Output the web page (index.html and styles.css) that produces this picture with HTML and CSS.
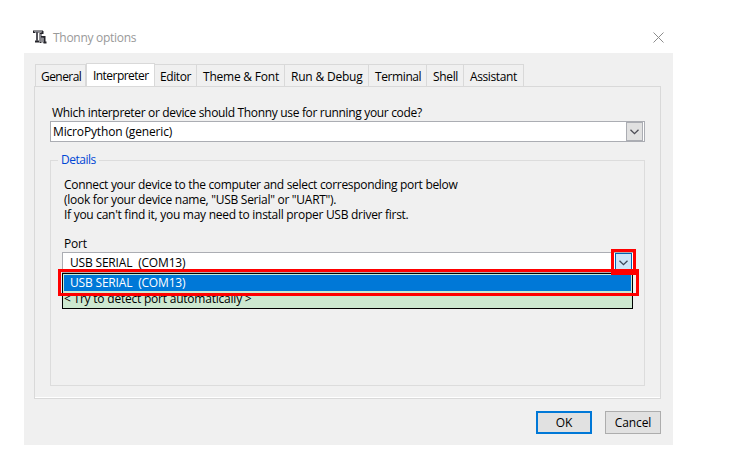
FILE: index.html
```html
<!DOCTYPE html>
<html lang="en">
<head>
<meta charset="utf-8">
<title>Thonny options</title>
<link rel="stylesheet" href="styles.css">
</head>
<body>
<main class="dialog">
  <header class="titlebar">
    <svg class="logo" width="14" height="14" viewBox="0 0 14 14"><path d="M0 1.500h10M4 2v9.500M1 3V1M9.500 1v3M2 11.500h4M7.500 3v10M7 8.500l2-1.500h2.500v5.500h2M10.500 8v4.500" fill="none" stroke="#25252b" stroke-width="2"/><path d="M1 1.500h8M4 2v9M7.500 4v8M8 8h2.500v4" fill="none" stroke="#9999a2" stroke-width=".8"/></svg>
    <h1>Thonny options</h1>
    <svg class="close" width="11" height="11" viewBox="0 0 11 11"><path d="M.5.5l10 10M10.500.5l-10 10" stroke="#8c8c8c" fill="none"/></svg>
  </header>
  <nav class="tabs">
    <span class="tab general">General</span><span class="tab active">Interpreter</span><span class="tab editor">Editor</span><span class="tab theme">Theme &amp; Font</span><span class="tab run">Run &amp; Debug</span><span class="tab terminal">Terminal</span><span class="tab shell">Shell</span><span class="tab assistant">Assistant</span>
  </nav>
  <section class="pane">
    <p class="question">Which interpreter or device should Thonny use for running your code?</p>
    <div class="combo"><span class="micro">MicroPython (generic)</span><span class="arrow"><svg width="9" height="6" viewBox="0 0 9 6"><path d="M.5.7l4 4 4-4" fill="none" stroke="#4c4c55" stroke-width="1.300"/></svg></span></div>
    <fieldset class="details">
      <legend>Details</legend>
      <div class="help">
        <p>Connect your device to the computer and select corresponding port below</p>
        <p class="hint">(look for your device name, "USB Serial" or "UART").</p>
        <p class="hint">If you can't find it, you may need to install proper USB driver first.</p>
      </div>
      <p class="port">Port</p>
      <div class="combo port-combo"><span class="usb">USB SERIAL&nbsp; (COM13)</span><span class="arrow hot"><svg width="9" height="6" viewBox="0 0 9 6"><path d="M.5.7l4 4 4-4" fill="none" stroke="#3c4658" stroke-width="1.300"/></svg></span>
        <div class="list"><div class="item selected"><span class="usb">USB SERIAL&nbsp; (COM13)</span></div><div class="item auto">&lt; Try to detect port automatically &gt;</div></div>
        <i class="mark mark-list"></i><i class="mark mark-arrow"></i>
      </div>
    </fieldset>
  </section>
  <footer class="buttons"><button class="ok">OK</button><button class="cancel">Cancel</button></footer>
</main>
</body>
</html>
```
FILE: styles.css
```css
* { box-sizing: border-box; }
body { margin: 0; background: #fff; }
.dialog {
  width: 649px; height: 445px; margin-left: 24px;
  display: flex; flex-direction: column;
  background: #f0f0f0; color: #000;
  font: 12px/15px "Open Sans", "Noto Sans", sans-serif;
  white-space: nowrap;
}
p { margin: 0; }
.titlebar { height: 53px; padding: 22px 9px 0 9px; background: #fff; display: flex; align-items: center; }
.logo { margin-top: -1px; }
.titlebar h1 { margin: 0 auto 0 6px; font-size: 12px; font-weight: 400; color: #999; letter-spacing: -.28px; }
.tabs { display: flex; align-items: flex-end; height: 33px; padding-left: 11px; }
.tab { height: 22px; border-top: 1px solid #d9d9d9; border-right: 1px solid #d9d9d9; padding: 4px 0 0 5px; letter-spacing: -.35px; }
.general { width: 51px; border-left: 1px solid #d9d9d9; letter-spacing: -.55px; }
.active { width: 69px; height: 23px; background: #fff; border-left: 1px solid #d9d9d9; padding-left: 6px; letter-spacing: -.55px; }
.editor { width: 42px; letter-spacing: -.4px; }
.theme { width: 88px; padding-left: 6px; letter-spacing: -.22px; }
.run { width: 84px; padding-left: 6px; letter-spacing: -.2px; }
.terminal { width: 58px; padding-left: 6px; letter-spacing: -.4px; }
.shell { width: 37px; padding-left: 6px; }
.assistant { width: 60px; padding-left: 6px; letter-spacing: -.4px; }
.pane { width: 627px; height: 313px; margin-left: 10px; padding: 18px 15px 0; border: 1px solid #d9d9d9; box-shadow: inset 0 -1px #fff; }
.question { padding-left: 2px; letter-spacing: -.33px; height: 16px; }
.combo { height: 21px; border: 1px solid #abadb3; background: #fff; display: flex; align-items: center; padding-left: 2px; }
.micro { letter-spacing: -.15px; }
.arrow { width: 17px; height: 19px; margin: 0 1px 0 auto; border: 1px solid #abadb3; background: #e1e1e1; display: flex; align-items: center; justify-content: center; }
.details { width: 595px; height: 234px; margin: 10px 0 0; padding: 0 0 0 11px; border: 1px solid #dcdcdc; min-width: 0; }
.details legend { padding: 0 3px; margin-left: -4px; height: 17px; color: #0046d5; letter-spacing: -.5px; }
.help { padding: 8px 0 0 2px; letter-spacing: -.31px; }
.hint { letter-spacing: -.28px; }
.port { padding: 14px 0 0 2px; height: 30px; letter-spacing: -.2px; }
.port-combo { position: relative; width: 572px; height: 21px; }
.usb { padding-left: 5px; letter-spacing: -.18px; }
.hot { border-color: #0062b1; background: #cce4f7; }
.list { position: absolute; left: -1px; top: 20px; width: 571px; height: 36px; border: 1px solid #000; background: #cde8d0; padding: 1px; }
.item { height: 16px; }
.selected { background: #0078d7; color: #fff; }
.item .usb { padding-left: 6px; }
.auto { letter-spacing: -.22px; }
.mark { position: absolute; border: 3px solid #f00; }
.mark-list { left: -5px; top: 16px; width: 581px; height: 27px; }
.mark-arrow { left: 548px; top: -4px; width: 25px; height: 26px; }
.buttons { display: flex; justify-content: flex-end; gap: 13px; padding: 12px 12px 0 0; }
.buttons button { width: 56px; height: 23px; padding: 0; border: 1px solid #adadad; background: #e1e1e1; color: #000; font: inherit; letter-spacing: -.1px; }
.buttons .ok { border: 2px solid #0078d7; }
```
